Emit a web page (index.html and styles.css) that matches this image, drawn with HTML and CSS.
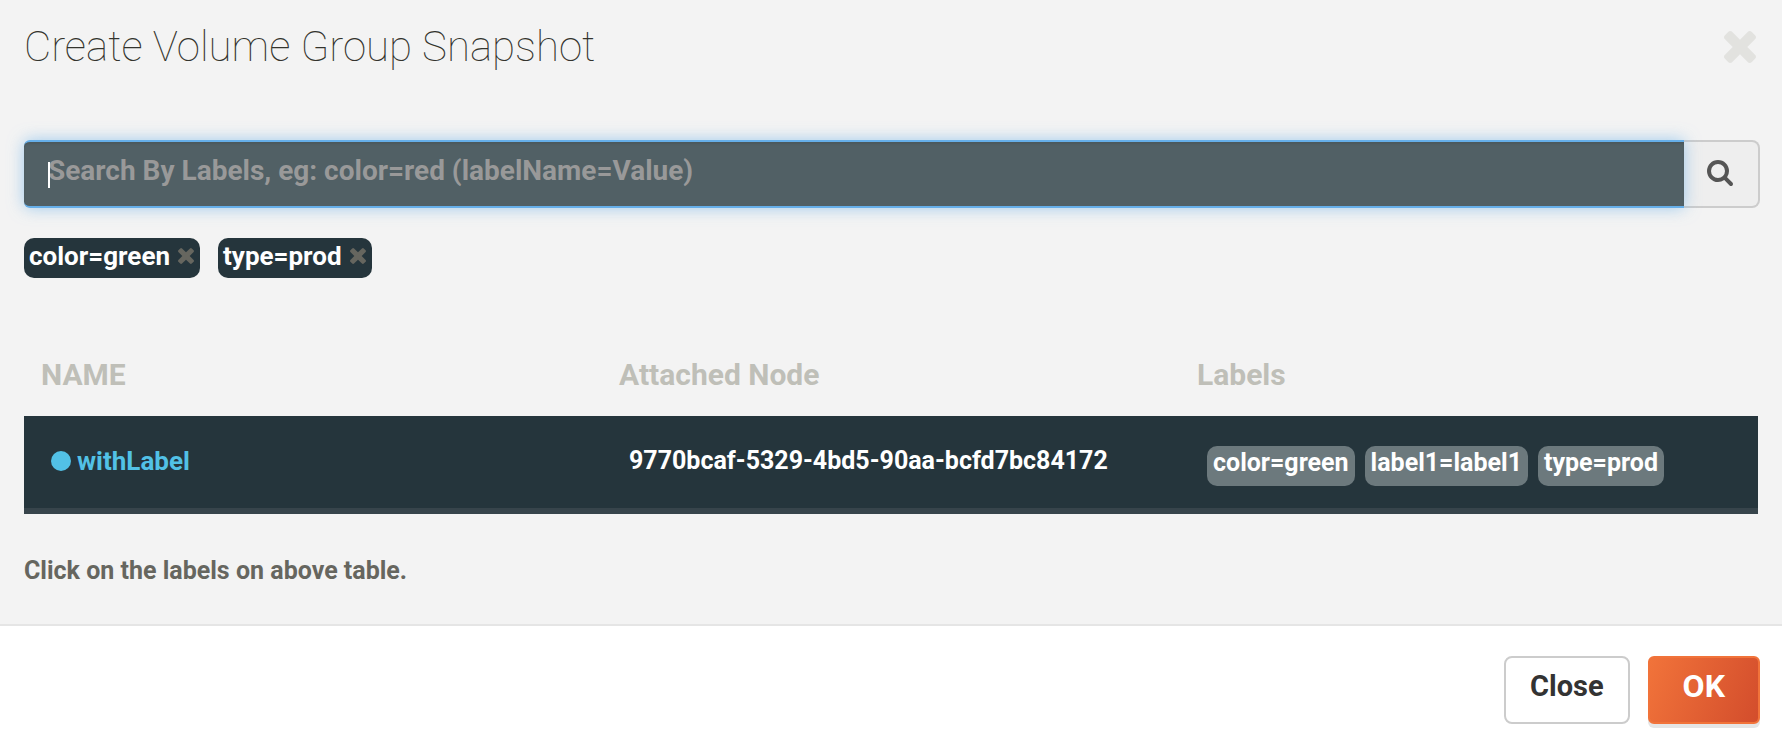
FILE: index.html
```html
<!DOCTYPE html>
<html lang="en">
<head>
<meta charset="utf-8">
<title>Create Volume Group Snapshot</title>
<link rel="stylesheet" href="styles.css">
</head>
<body>
<svg class="sprite" aria-hidden="true">
  <symbol id="times" viewBox="110 366 1188 1188"><path d="M1298 1322q0 40-28 68l-136 136q-28 28-68 28t-68-28l-294-294-294 294q-28 28-68 28t-68-28l-136-136q-28-28-28-68t28-68l294-294-294-294q-28-28-28-68t28-68l136-136q28-28 68-28t68 28l294 294 294-294q28-28 68-28t68 28l136 136q28 28 28 68t-28 68l-294 294 294 294q28 28 28 68z"/></symbol>
</svg>
<main class="modal">
  <section class="modal-body">
    <header class="modal-header">
      <h1 class="title">Create Volume Group Snapshot</h1>
      <button class="icon-button dismiss" type="button" aria-label="Close dialog"><svg class="icon-large"><use href="#times"/></svg></button>
    </header>

    <form class="search">
      <div class="search-field">
        <input class="search-input" type="text" aria-label="Search by labels" placeholder="Search By Labels, eg: color=red (labelName=Value)">
        <span class="caret"></span>
      </div>
      <button class="search-button" type="button" aria-label="Search">
        <svg class="icon-search" viewBox="64 128 1664 1664"><path d="M1216 832q0-185-131.5-316.5t-316.5-131.5-316.5 131.5-131.5 316.5 131.5 316.5 316.5 131.5 316.5-131.5 131.5-316.5zm512 832q0 52-38 90t-90 38q-54 0-90-38l-343-342q-179 124-399 124-143 0-273.5-55.5t-225-150-150-225-55.5-273.5 55.5-273.5 150-225 225-150 273.5-55.5 273.5 55.5 225 150 150 225 55.5 273.5q0 220-124 399l343 343q37 37 37 90z"/></svg>
      </button>
    </form>

    <div class="filters">
      <span class="chip chip-dark">color=green<button class="icon-button" type="button" aria-label="Remove color=green"><svg class="icon-small"><use href="#times"/></svg></button></span>
      <span class="chip chip-dark">type=prod<button class="icon-button" type="button" aria-label="Remove type=prod"><svg class="icon-small"><use href="#times"/></svg></button></span>
    </div>

    <table class="volumes">
      <thead>
        <tr><th scope="col">NAME</th><th scope="col">Attached Node</th><th scope="col">Labels</th></tr>
      </thead>
      <tbody>
        <tr>
          <td><a class="volume-link" href="#withLabel"><span class="dot"></span>withLabel</a></td>
          <td>9770bcaf-5329-4bd5-90aa-bcfd7bc84172</td>
          <td>
            <div class="labels">
              <button class="chip" type="button">color=green</button>
              <button class="chip" type="button">label1=label1</button>
              <button class="chip" type="button">type=prod</button>
            </div>
          </td>
        </tr>
      </tbody>
    </table>

    <p class="hint">Click on the labels on above table.</p>
  </section>

  <footer class="modal-footer">
    <button class="button button-close" type="button">Close</button>
    <button class="button button-ok" type="button">OK</button>
  </footer>
</main>
</body>
</html>
```
FILE: styles.css
```css
* {
  box-sizing: border-box;
}

body {
  margin: 0;
  background: #fff;
  color: #66665f;
  font-family: Roboto, "Liberation Sans", sans-serif;
  font-size: 25px;
  font-weight: 700;
  line-height: 32px;
}

button,
input {
  margin: 0;
  font: inherit;
}

button {
  cursor: pointer;
}

.sprite {
  display: none;
}

.modal-body {
  padding: 22px 22px 36px 24px;
  background: #f3f3f3;
  border-bottom: 2px solid #e5e5e5;
}

.modal-header {
  display: flex;
  align-items: center;
  justify-content: space-between;
  padding-right: 4px;
}

.title {
  margin: 0;
  color: #33332d;
  font-size: 42px;
  font-weight: 250;
  line-height: 50px;
}

.icon-button {
  display: flex;
  padding: 0;
  border: 0;
  background: none;
}

.icon-button svg {
  fill: currentColor;
}

.dismiss {
  color: #e2e2df;
}

.icon-large {
  width: 32px;
  height: 32px;
}

.icon-small {
  width: 16px;
  height: 16px;
}

.search {
  display: flex;
  height: 68px;
  margin-top: 68px;
}

.search-field {
  position: relative;
  flex: 1;
}

.search-input {
  width: 100%;
  height: 100%;
  padding: 0 24px 8px;
  border: solid #66afe9;
  border-width: 2px 0;
  border-radius: 6px 0 0 6px;
  outline: 0;
  background: #516065;
  box-shadow: inset 0 2px 2px rgba(0, 0, 0, 0.08), 0 0 16px rgba(102, 175, 233, 0.6);
  color: #fff;
  font-size: 28px;
}

.search-input::placeholder {
  color: #999;
  opacity: 1;
}

.caret {
  position: absolute;
  top: 22px;
  left: 24px;
  width: 2px;
  height: 26px;
  background: #fff;
}

.search-button {
  display: flex;
  align-items: center;
  justify-content: center;
  width: 76px;
  padding: 0 2px 2px 0;
  border: solid #ccc;
  border-width: 2px 2px 2px 0;
  border-radius: 0 8px 8px 0;
  background: #eee;
}

.icon-search {
  width: 26px;
  height: 26px;
  fill: #555;
}

.filters {
  display: flex;
  gap: 18px;
  margin-top: 30px;
}

.chip {
  display: flex;
  align-items: center;
  gap: 8px;
  height: 40px;
  padding: 0 6px 6px;
  border: 0;
  border-radius: 10px;
  background: #6c797d;
  color: #fff;
}

.chip-dark {
  padding: 0 6px 4px 5px;
  background: #25353c;
  font-size: 26px;
}

.chip-dark .icon-button {
  color: #66665f;
}

.volumes {
  width: 100%;
  margin-top: 66px;
  padding-right: 2px;
  border-spacing: 0;
  table-layout: fixed;
}

.volumes th {
  padding: 11px 17px 21px;
  color: #bfbfb8;
  font-size: 30px;
  line-height: 40px;
  text-align: left;
}

.volumes td {
  height: 98px;
  padding: 0 27px 2px;
  border-bottom: 6px solid #37444b;
  background: #25353c;
  color: #fff;
  vertical-align: middle;
}

.volume-link {
  display: flex;
  align-items: center;
  gap: 6px;
  color: #52c1e6;
  font-size: 26px;
  text-decoration: none;
}

.dot {
  width: 20px;
  height: 20px;
  border-radius: 50%;
  background: currentColor;
}

.labels {
  display: flex;
  gap: 10px;
  padding-top: 10px;
}

.hint {
  margin: 41px 0 1px;
}

.modal-footer {
  display: flex;
  justify-content: flex-end;
  gap: 18px;
  padding: 30px 22px 22px;
}

.button {
  height: 68px;
  padding: 0 24px 8px;
  border: 2px solid #ccc;
  border-radius: 8px;
  background: #fff;
  color: #333;
  font-size: 29px;
}

.button-ok {
  padding: 0 33px 8px;
  border-color: #f1733a;
  border-radius: 6px;
  background: linear-gradient(110deg, #f1733a, #d34d2c) padding-box, #f1733a;
  box-shadow: 0 4px 0 #e5e5e5;
  color: #fff;
  font-size: 32px;
}
```
